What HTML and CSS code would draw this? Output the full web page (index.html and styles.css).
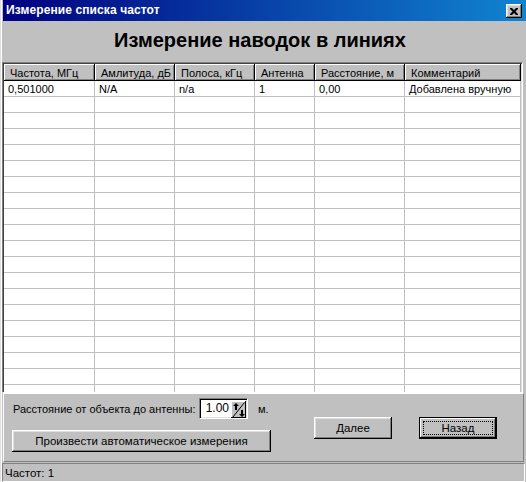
FILE: index.html
```html
<!DOCTYPE html>
<html lang="ru">
<head>
<meta charset="utf-8">
<title>Измерение списка частот</title>
<link rel="stylesheet" href="styles.css">
</head>
<body>
<div class="window">
  <div class="titlebar">
    <span class="title">Измерение списка частот</span>
    <span class="close">
      <svg width="8" height="7" viewBox="0 0 8 7"><path d="M0 0h2l2 2 2-2h2v1l-2.5 2.5L8 6v1H6L4 5 2 7H0V6l2.5-2.5L0 1z" fill="#000"/></svg>
    </span>
  </div>
  <div class="heading">Измерение наводок в линиях</div>
  <div class="grid">
    <div class="row head">
      <div class="cell">Частота, МГц</div>
      <div class="cell">Амлитуда, дБ</div>
      <div class="cell">Полоса, кГц</div>
      <div class="cell">Антенна</div>
      <div class="cell">Расстояние, м</div>
      <div class="cell">Комментарий</div>
    </div>
    <div class="body" id="body">
      <div class="row">
        <div class="cell">0,501000</div>
        <div class="cell">N/A</div>
        <div class="cell">n/a</div>
        <div class="cell">1</div>
        <div class="cell">0,00</div>
        <div class="cell">Добавлена вручную</div>
      </div>
    </div>
  </div>
  <div class="panel">
    <div class="left">
      <div class="spinrow">
        <span class="label">Расстояние от объекта до антенны:</span>
        <span class="spin">
          <span class="spinval">1.00</span>
          <span class="spinbtn">
            <svg width="13" height="16" viewBox="0 0 13 16">
              <line x1="12.5" y1="0.5" x2="0.5" y2="15.5" stroke="#000" stroke-width="1"/>
              <path d="M4 1 L7 4 L5 4 L5 8 L3 8 L3 4 L1 4 Z" fill="#000"/>
              <path d="M10 15 L13 12 L11 12 L11 8 L9 8 L9 12 L7 12 Z" fill="#000"/>
            </svg>
          </span>
        </span>
        <span class="unit">м.</span>
      </div>
      <button class="btn wide">Произвести автоматическое измерения</button>
    </div>
    <div class="right">
      <button class="btn">Далее</button>
      <button class="btn default"><span class="focus">Назад</span></button>
    </div>
  </div>
  <div class="status"><span class="statustext">Частот: 1</span></div>
</div>
<script>
  var b = document.getElementById('body');
  for (var i = 0; i < 20; i++) {
    var r = document.createElement('div');
    r.className = 'row';
    for (var j = 0; j < 6; j++) {
      var c = document.createElement('div');
      c.className = 'cell';
      r.appendChild(c);
    }
    b.appendChild(r);
  }
</script>
</body>
</html>
```

FILE: styles.css
```css
* { box-sizing: border-box; }
html, body {
  margin: 0;
  padding: 0;
}
body {
  width: 526px;
  height: 482px;
  overflow: hidden;
  background: #c0c0c0;
  font-family: "Liberation Sans", Arial, sans-serif;
  font-size: 11px;
  color: #000;
}
.window {
  width: 526px;
  height: 482px;
  display: flex;
  flex-direction: column;
  border-left: 1px solid #dfdfdf;
  padding-left: 1px;
  box-shadow: inset 1px 0 0 #fff;
}
.titlebar {
  height: 21px;
  flex: none;
  margin-left: 1px;
  background: linear-gradient(to right, #000080, #1084d0);
  display: flex;
  align-items: center;
  justify-content: space-between;
  padding: 0 4px 1px 3px;
}
.title {
  color: #fff;
  font-weight: bold;
  font-size: 12px;
  letter-spacing: 0.1px;
}
.close {
  width: 16px;
  height: 14px;
  background: #c0c0c0;
  box-shadow: inset -1px -1px 0 #000, inset 1px 1px 0 #fff, inset -2px -2px 0 #808080, inset 2px 2px 0 #dfdfdf;
  display: flex;
  align-items: center;
  justify-content: center;
  margin-top: 2px;
}
.heading {
  height: 41px;
  flex: none;
  display: flex;
  align-items: center;
  justify-content: center;
  font-weight: bold;
  font-size: 20px;
  padding: 0 8px 2px 0;
}
.grid {
  flex: none;
  height: 331px;
  margin: 0 3px 0 0;
  border-top: 1px solid #808080;
  border-left: 1px solid #808080;
  border-right: 1px solid #fff;
  border-bottom: 1px solid #fff;
  box-shadow: inset 1px 1px 0 #404040, inset -1px -1px 0 #dfdfdf;
  background: #fff;
  overflow: hidden;
  padding: 1px 1px 0 1px;
  display: flex;
  flex-direction: column;
}
.row {
  display: grid;
  grid-template-columns: 91px 80px 80px 60px 90px 116px;
  height: 16px;
  flex: none;
}
.body {
  flex: 1;
  overflow: hidden;
  background: #fff;
}
.row .cell {
  border-right: 1px solid #c0c0c0;
  border-bottom: 1px solid #c0c0c0;
  padding: 1px 0 0 4px;
  line-height: 14px;
  white-space: nowrap;
  overflow: hidden;
}
.row.head {
  height: 17px;
}
.row.head .cell {
  background: #c0c0c0;
  border-right: 1px solid #000;
  border-bottom: 1px solid #000;
  box-shadow: inset 1px 1px 0 #fff, inset -1px -1px 0 #808080;
  padding: 2px 0 0 6px;
}
.panel {
  flex: none;
  height: 69px;
  margin: 0 2px 0 1px;
  border-top: 1px solid #fff;
  border-left: 1px solid #fff;
  border-right: 1px solid #808080;
  border-bottom: 1px solid #808080;
  display: flex;
  padding: 4px 0 0 7px;
}
.left {
  display: flex;
  flex-direction: column;
  width: 260px;
}
.spinrow {
  display: flex;
  align-items: center;
  height: 21px;
  padding-left: 2px;
  white-space: nowrap;
}
.label {
  width: 186px;
  flex: none;
  font-size: 11px;
  white-space: nowrap;
}
.spin {
  display: flex;
  flex: none;
  width: 49px;
  height: 21px;
  background: #fff;
  border-top: 1px solid #808080;
  border-left: 1px solid #808080;
  border-right: 1px solid #fff;
  border-bottom: 1px solid #fff;
  box-shadow: inset 1px 1px 0 #000, inset -1px -1px 0 #dfdfdf;
  padding: 2px 1px 2px 2px;
}
.spinval {
  flex: 1;
  text-align: right;
  padding-right: 2px;
  font-size: 12px;
  line-height: 15px;
}
.spinbtn {
  width: 15px;
  height: 17px;
  background: #c0c0c0;
  box-shadow: inset -1px -1px 0 #000, inset 1px 1px 0 #fff;
  display: flex;
  align-items: center;
  justify-content: center;
}
.unit {
  margin-left: 10px;
  font-size: 11px;
}
.btn {
  font-family: "Liberation Sans", Arial, sans-serif;
  font-size: 11.5px;
  color: #000;
  background: #c0c0c0;
  border: none;
  padding: 0;
  margin: 0;
  width: 78px;
  height: 22px;
  box-shadow: inset -1px -1px 0 #000, inset 1px 1px 0 #fff, inset -2px -2px 0 #808080, inset 2px 2px 0 #dfdfdf;
  display: flex;
  align-items: center;
  justify-content: center;
}
.btn.wide {
  width: 259px;
  margin-top: 11px;
  margin-left: 1px;
}
.right {
  display: flex;
  gap: 27px;
  margin-left: 43px;
  padding-top: 19px;
}
.btn.default {
  border: 1px solid #000;
  box-shadow: inset -1px -1px 0 #000, inset 1px 1px 0 #fff, inset -2px -2px 0 #808080;
  padding: 3px;
}
.focus {
  flex: 1;
  align-self: stretch;
  border: 1px dotted #000;
  display: flex;
  align-items: center;
  justify-content: center;
}
.status {
  flex: none;
  height: 19px;
  margin: 1px 1px 0 0;
  border-top: 1px solid #808080;
  border-left: 1px solid #808080;
  border-right: 1px solid #fff;
  border-bottom: 1px solid #fff;
  padding: 0 0 0 2px;
  display: flex;
  align-items: center;
}
.statustext {
  font-size: 11.5px;
}
```
